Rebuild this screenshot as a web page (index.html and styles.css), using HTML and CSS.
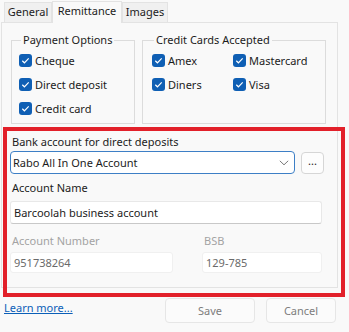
FILE: index.html
```html
<!DOCTYPE html>
<html>
<head>
<meta charset="utf-8">
<link rel="stylesheet" href="styles.css">
</head>
<body>
<div class="win">
  <div class="tabs">
    <div class="tab">General</div>
    <div class="tab active">Remittance</div>
    <div class="tab">Images</div>
  </div>
  <div class="panel">
    <div class="groups">
      <fieldset class="group pay">
        <legend>Payment Options</legend>
        <div class="cb"><span class="box"><svg viewBox="0 0 13 13"><path d="M3.3 6.8 L5.4 8.8 L9.7 4.4"/></svg></span>Cheque</div>
        <div class="cb"><span class="box"><svg viewBox="0 0 13 13"><path d="M3.3 6.8 L5.4 8.8 L9.7 4.4"/></svg></span>Direct deposit</div>
        <div class="cb"><span class="box"><svg viewBox="0 0 13 13"><path d="M3.3 6.8 L5.4 8.8 L9.7 4.4"/></svg></span>Credit card</div>
      </fieldset>
      <fieldset class="group cards">
        <legend>Credit Cards Accepted</legend>
        <div class="cardgrid">
          <div class="cb"><span class="box"><svg viewBox="0 0 13 13"><path d="M3.3 6.8 L5.4 8.8 L9.7 4.4"/></svg></span>Amex</div>
          <div class="cb"><span class="box"><svg viewBox="0 0 13 13"><path d="M3.3 6.8 L5.4 8.8 L9.7 4.4"/></svg></span>Mastercard</div>
          <div class="cb"><span class="box"><svg viewBox="0 0 13 13"><path d="M3.3 6.8 L5.4 8.8 L9.7 4.4"/></svg></span>Diners</div>
          <div class="cb"><span class="box"><svg viewBox="0 0 13 13"><path d="M3.3 6.8 L5.4 8.8 L9.7 4.4"/></svg></span>Visa</div>
        </div>
      </fieldset>
    </div>
    <div class="bank">
      <div class="lbl first">Bank account for direct deposits</div>
      <div class="selrow">
        <div class="select"><span>Rabo All In One Account</span><svg class="chev" viewBox="0 0 10 6"><path d="M0.8 0.8 L5 4.8 L9.2 0.8"/></svg></div>
        <div class="more">...</div>
      </div>
      <div class="lbl second">Account Name</div>
      <div class="input">Barcoolah business account</div>
      <div class="pair">
        <div class="col">
          <div class="lbl dis">Account Number</div>
          <div class="input dis">951738264</div>
        </div>
        <div class="col">
          <div class="lbl dis">BSB</div>
          <div class="input dis">129-785</div>
        </div>
      </div>
    </div>
  </div>
  <div class="foot">
    <a class="learn" href="#">Learn more...</a>
    <div class="btn save">Save</div>
    <div class="btn cancel">Cancel</div>
  </div>
  <div class="highlight"></div>
</div>
</body>
</html>
```

FILE: styles.css
```css
* { box-sizing: border-box; }
body {
  margin: 0;
  background: #f3f3f3;
  font-family: "Noto Sans", "Open Sans", sans-serif;
  font-size: 11px;
  color: #1c1c1c;
}
.win {
  position: relative;
  width: 349px;
  height: 332px;
  background: #f9f9f9;
}
.tabs {
  display: flex;
  align-items: flex-end;
  height: 22px;
  padding-left: 4px;
}
.tab {
  height: 20px;
  line-height: 18px;
  text-align: center;
  background: #f0f0f0;
  border: 1px solid #e3e3e3;
  border-bottom: none;
  width: 48px;
}
.tab.active {
  height: 22px;
  width: 70px;
  background: #f9f9f9;
  position: relative;
  z-index: 1;
  line-height: 18px;
  margin-bottom: -1px;
}
.tab:last-child { width: 46px; }
.panel {
  margin-left: 1px;
  width: 337px;
  height: 266px;
  border: 1px solid #e3e3e3;
  background: #f9f9f9;
  padding: 0 8px 0 8px;
}
.groups {
  display: flex;
  gap: 7px;
  margin-top: 9px;
  padding-left: 1px;
}
.group {
  margin: 0;
  border: 1px solid #dcdcdc;
  padding: 0 0 3px 7px;
}
.group legend {
  padding: 0 2px;
  margin-left: 2px;
  line-height: 16px;
}
.pay { width: 124px; }
.cards { width: 184px; padding-left: 9px; }
.cb {
  display: flex;
  align-items: center;
  height: 24px;
  gap: 3px;
}
.box {
  width: 13px;
  height: 13px;
  border-radius: 3px;
  background: #0f5fb4;
  display: flex;
}
.box svg { width: 13px; height: 13px; }
.box path { fill: none; stroke: #fff; stroke-width: 1.2; }
.cardgrid {
  display: grid;
  grid-template-columns: 81px auto;
}
.bank {
  padding-top: 10px;
}
.lbl {
  line-height: 16px;
  padding-left: 2px;
}
.selrow {
  display: flex;
  align-items: center;
  gap: 6px;
  margin-top: 1px;
}
.select {
  width: 285px;
  height: 23px;
  background: #fff;
  border: 1px solid #3d7fc6;
  border-radius: 4px;
  display: flex;
  align-items: center;
  justify-content: space-between;
  padding: 0 5px 0 2px;
}
.chev { width: 10px; height: 6px; }
.chev path { fill: none; stroke: #777; stroke-width: 1; }
.more {
  width: 23px;
  height: 22px;
  background: #fdfdfd;
  border: 1px solid #d6d6d6;
  border-radius: 4px;
  text-align: center;
  line-height: 16px;
  font-size: 11px;
}
.lbl.second { margin-top: 6px; }
.input {
  margin-top: 5px;
  height: 23px;
  background: #fff;
  border: 1px solid #e8e8e8;
  border-bottom-color: #c8c8c8;
  border-radius: 3px;
  padding-left: 3px;
  line-height: 21px;
  width: 312px;
}
.pair {
  display: grid;
  grid-template-columns: 163px 120px;
  column-gap: 29px;
  margin-top: 9px;
}
.lbl.dis { color: #a3a3a3; }
.input.dis {
  margin-top: 3px;
  width: auto;
  height: 21px;
  line-height: 19px;
  border-color: #f0f0f0;
  color: #6a6a6a;
}
.foot {
  display: flex;
  align-items: center;
  height: 44px;
  padding: 0 0 0 4px;
}
.learn {
  color: #0b5fb8;
  margin-right: auto;
  padding-bottom: 5px;
}
.btn {
  height: 25px;
  line-height: 23px;
  text-align: center;
  border: 1px solid #e6e6e6;
  border-radius: 4px;
  background: #fbfbfb;
  color: #7d7d7d;
}
.save { width: 90px; }
.cancel { width: 70px; margin-left: 11px; margin-right: 13px; }
.highlight {
  position: absolute;
  left: 3px;
  top: 127px;
  width: 342px;
  height: 170px;
  border: 4px solid #e2202a;
  pointer-events: none;
}
```
